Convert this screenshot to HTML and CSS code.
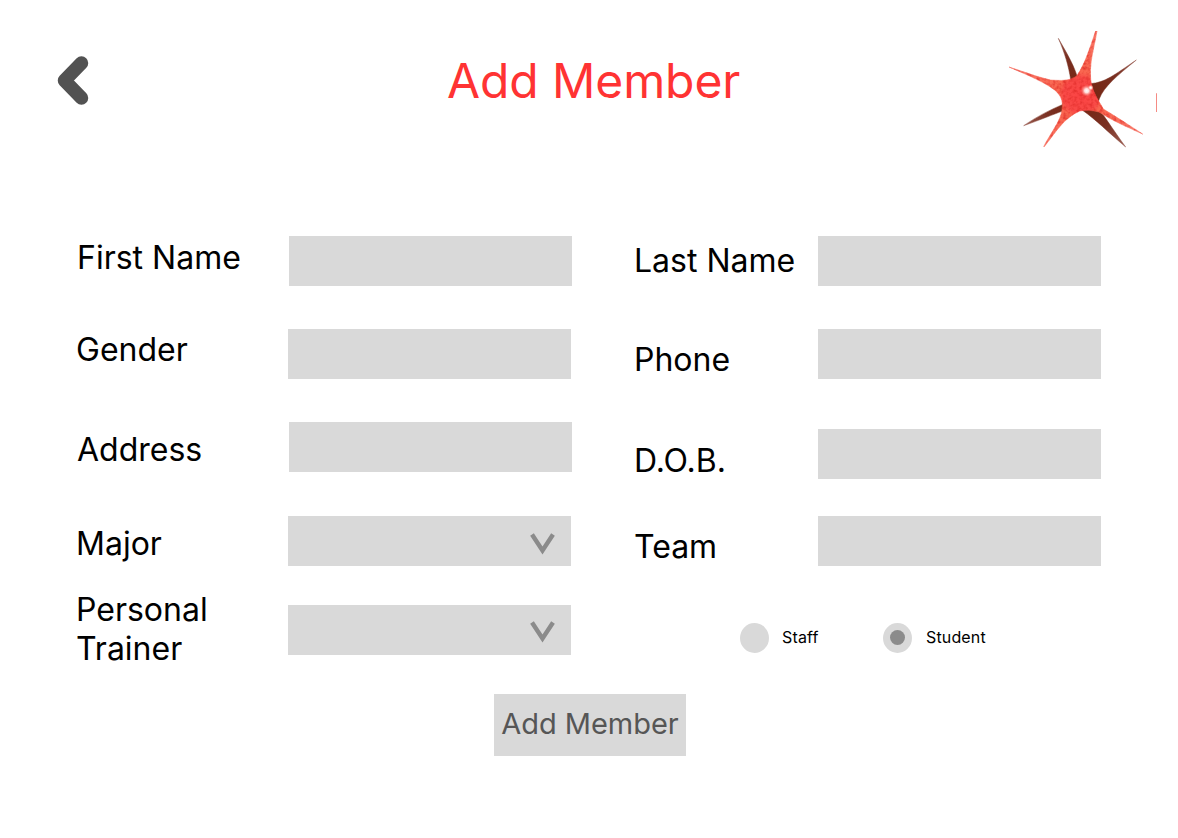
FILE: index.html
```html
<!DOCTYPE html>
<html lang="en">
<head>
<meta charset="utf-8">
<title>Add Member</title>
<link rel="stylesheet" href="styles.css">
</head>
<body>
<header class="header">
  <a class="back" href="#" aria-label="Back">
    <svg width="34" height="52" viewBox="0 0 34 52"><path d="M25.5 8L8.5 25.5L25.5 43" fill="none" stroke="#525252" stroke-width="13.5" stroke-linecap="round" stroke-linejoin="round"/></svg>
  </a>
  <h1 class="title">Add Member</h1>
  <svg class="logo" width="170" height="140" viewBox="0 0 510 420" aria-hidden="true">
    <defs>
      <radialGradient id="body" gradientUnits="userSpaceOnUse" cx="242" cy="225" r="190">
        <stop offset="0" stop-color="#fb4444"/><stop offset=".27" stop-color="#f84a47"/><stop offset=".36" stop-color="#f9664f"/><stop offset="1" stop-color="#f97565"/>
      </radialGradient>
      <radialGradient id="dark" gradientUnits="userSpaceOnUse" cx="245" cy="222" r="200">
        <stop offset="0" stop-color="#74230f"/><stop offset=".6" stop-color="#7a3022"/><stop offset="1" stop-color="#9a5d52"/>
      </radialGradient>
      <radialGradient id="glow">
        <stop offset="0" stop-color="#fff"/><stop offset=".35" stop-color="#ffe0dc"/><stop offset="1" stop-color="#ff8078" stop-opacity="0"/>
      </radialGradient>
      <filter id="grain" x="0" y="0" width="100%" height="100%" color-interpolation-filters="sRGB">
        <feTurbulence type="fractalNoise" baseFrequency=".1" numOctaves="2" seed="4" result="noise"/>
        <feColorMatrix in="noise" values="0 0 0 0 .86  0 0 0 0 .15  0 0 0 0 .14  1.6 0 0 0 -.66" result="spots"/>
        <feComposite in="spots" in2="SourceGraphic" operator="in" result="cut"/>
        <feMerge><feMergeNode in="SourceGraphic"/><feMergeNode in="cut"/></feMerge>
      </filter>
    </defs>
    <path fill="url(#dark)" stroke="url(#dark)" stroke-width="1.5" d="M175 55C192 86 218 126 232 170L245 205L272 191C315 187 340 167 409 120C350 168 312 200 298 236L290 262C310 281 335 324 377 381C320 333 292 302 245 269L186 274C165 281 120 300 71 317C110 290 150 270 187 254L212 178C206 140 195 100 175 55Z"/>
    <path fill="url(#body)" stroke="url(#body)" stroke-width="1.5" filter="url(#grain)" d="M27 141C80 158 115 172 152 180C180 182 210 184 231 167C256 130 272 77 287 33L291 33C283 80 267 130 272 178C276 215 296 242 310 267C345 288 385 314 428 342C380 320 345 306 297 276C275 270 255 270 239 273C192 293 165 339 133 380L131 380C148 345 183 302 186 270C191 238 180 224 164 210C130 184 80 164 27 141Z"/>
    <circle cx="260" cy="212" r="18" fill="url(#glow)"/>
    <circle cx="272" cy="203" r="9" fill="url(#glow)"/>
    <path fill="#f58b84" d="M468 220h3v56h-3z"/>
  </svg>
</header>
<form class="form">
  <div class="fields">
    <div class="column column-left">
      <div class="row first"><label class="label" for="first">First Name</label><input class="box" id="first"></div>
      <div class="row gender"><label class="label" for="gender">Gender</label><input class="box" id="gender"></div>
      <div class="row address"><label class="label" for="address">Address</label><input class="box" id="address"></div>
      <div class="row major"><span class="label">Major</span><div class="box select"><svg width="26" height="22" viewBox="0 0 26 22"><path d="M2 1.5L12.5 17.5L23 1.5" fill="none" stroke="#8b8b8b" stroke-width="4.4"/></svg></div></div>
      <div class="row trainer"><span class="label">Personal<br>Trainer</span><div class="box select"><svg width="26" height="22" viewBox="0 0 26 22"><path d="M2 1.5L12.5 17.5L23 1.5" fill="none" stroke="#8b8b8b" stroke-width="4.4"/></svg></div></div>
    </div>
    <div class="column column-right">
      <div class="row last"><label class="label" for="last">Last Name</label><input class="box" id="last"></div>
      <div class="row phone"><label class="label" for="phone">Phone</label><input class="box" id="phone"></div>
      <div class="row dob"><label class="label" for="dob">D.O.B.</label><input class="box" id="dob"></div>
      <div class="row team"><label class="label" for="team">Team</label><input class="box" id="team"></div>
      <div class="radios">
        <span class="radio"></span><span class="option staff">Staff</span>
        <span class="radio"><span class="dot"></span></span><span class="option student">Student</span>
      </div>
    </div>
  </div>
  <button class="submit" type="button">Add Member</button>
</form>
</body>
</html>
```

FILE: styles.css
```css
* { box-sizing: border-box; }
body { margin: 0; width: 1178px; height: 838px; overflow: hidden; background: #fff; color: #000; font-family: Inter, sans-serif; }
.header { display: flex; align-items: flex-start; height: 236px; padding-left: 56px; }
.back { width: 391px; margin-top: 55px; }
.back svg { display: block; }
.title { margin: 52px 0 0; width: 553px; font-size: 48px; font-weight: 400; line-height: 58px; letter-spacing: -0.1px; color: #ff3333; white-space: nowrap; }
.logo { display: block; flex: none; margin-top: 20px; }
.form { display: flex; flex-direction: column; }
.fields { display: flex; height: 458px; padding-left: 76px; }
.column-left { width: 558px; }
.column-right { width: 467px; }
.row { display: flex; align-items: flex-start; height: 50px; }
.label { flex: none; font-size: 32px; line-height: 39px; white-space: nowrap; }
.column-left .label { width: 212px; }
.column-right .label { width: 184px; }
.box { width: 283px; height: 50px; margin: 0; padding: 0 12px; border: 0; border-radius: 0; background: #d9d9d9; font: 24px Inter, sans-serif; }
.first, .address { padding-left: 1px; }
.gender, .address, .phone { margin-top: 43px; }
.major { margin-top: 44px; }
.trainer { margin-top: 39px; }
.dob { margin-top: 50px; }
.team { margin-top: 37px; }
.first .label { margin-top: 2px; }
.gender .label { margin-top: 1px; }
.address .label { margin-top: 8px; }
.major .label { margin-top: 8px; }
.trainer .label { margin-top: -15px; }
.last .label { margin-top: 5px; }
.phone .label { margin-top: 11px; }
.dob .label { margin-top: 12px; }
.team .label { margin-top: 11px; }
.select { display: flex; justify-content: flex-end; padding: 17px 15px 0 0; }
.trainer .select { padding-top: 16px; }
.radios { display: flex; align-items: center; margin: 57px 0 0 106px; height: 30px; }
.radio { display: flex; align-items: center; justify-content: center; width: 29px; height: 30px; border-radius: 50%; background: #d9d9d9; }
.dot { width: 15px; height: 15px; margin-bottom: 1px; border-radius: 50%; background: #8b8b8b; }
.option { margin-left: 13px; padding-bottom: 2px; font-size: 16px; line-height: 20px; letter-spacing: 0.15px; }
.staff { width: 101px; }
.student { margin-left: 14px; }
.submit { width: 192px; height: 62px; margin-left: 494px; padding: 0 0 4px; border: 0; background: #d9d9d9; color: #565656; font: 400 29px/35px Inter, sans-serif; letter-spacing: -0.05px; white-space: nowrap; }
```
